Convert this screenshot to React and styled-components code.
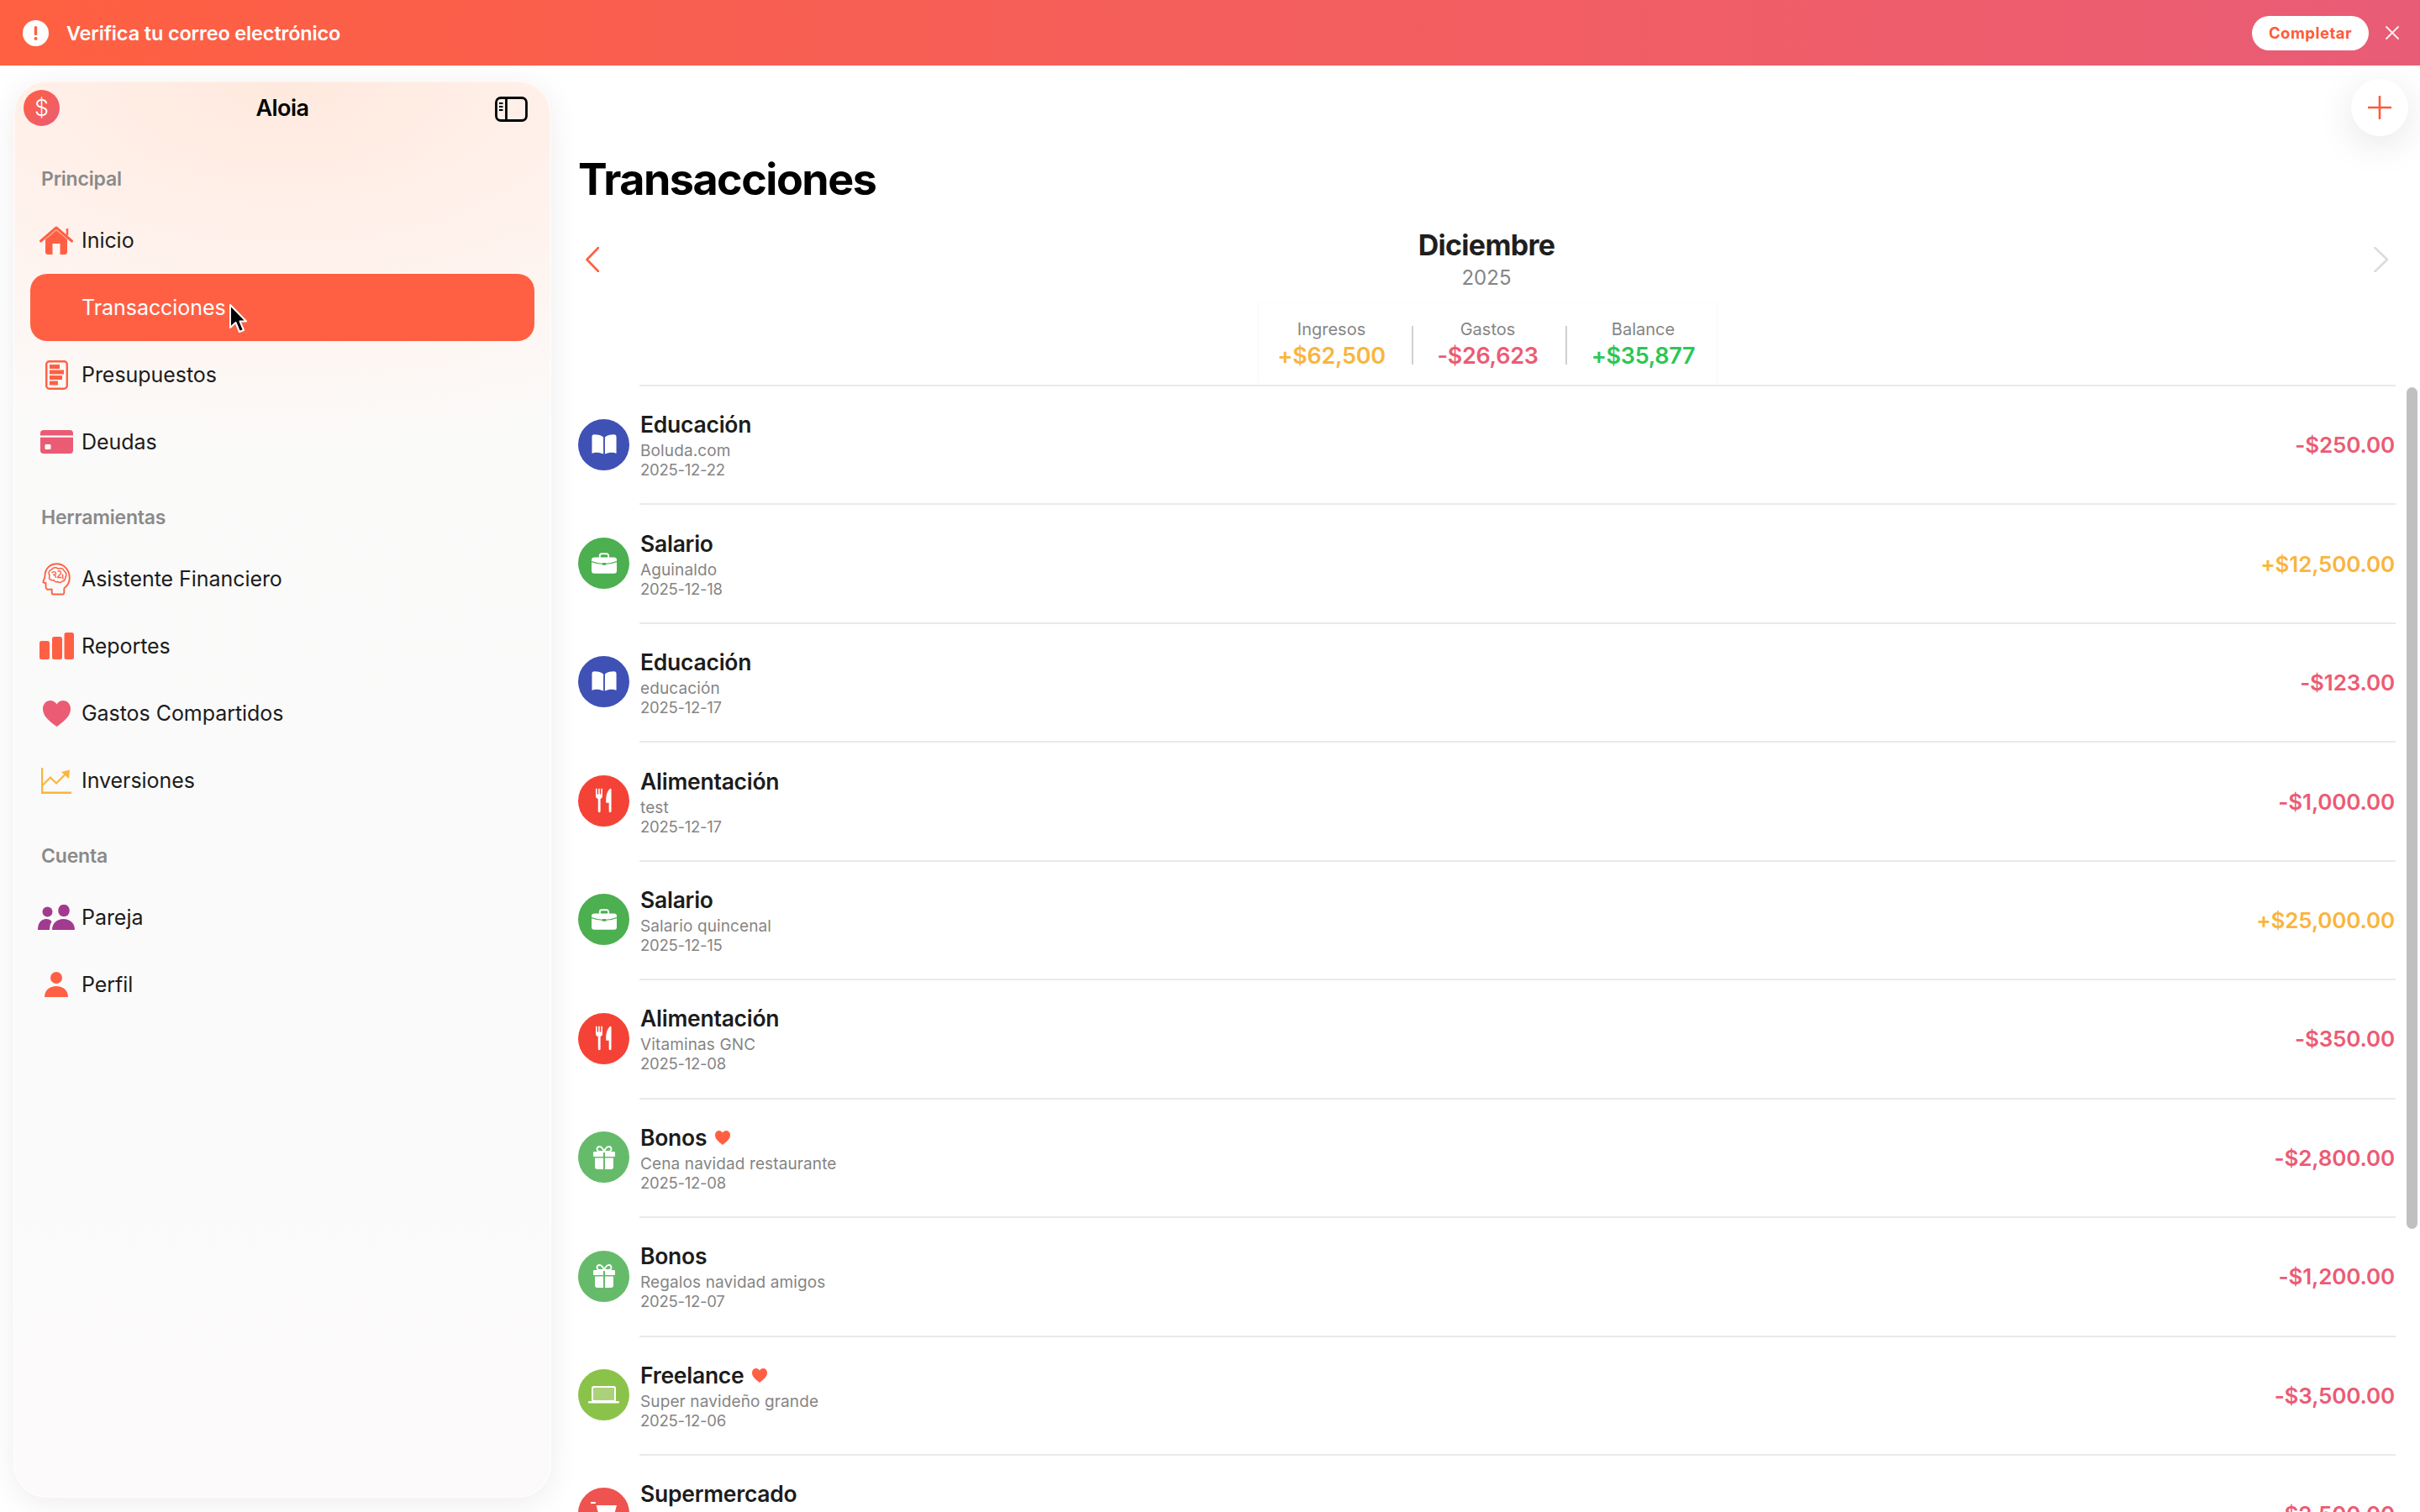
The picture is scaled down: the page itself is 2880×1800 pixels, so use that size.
import React from "react";
import styled, { createGlobalStyle } from "styled-components";

const ORANGE = "#ff6044";
const PINK = "#ec5b74";
const AMBER = "#f9b53d";
const GREEN = "#2cc656";

const Global = createGlobalStyle`
  html, body { margin: 0; padding: 0; height: 100%; overflow: hidden; background: #fff; }
  body { font-family: Inter, "Liberation Sans", sans-serif; -webkit-font-smoothing: antialiased; }
  #root { height: 100%; }
  * { box-sizing: border-box; }
`;

const Page = styled.div`
  position: relative;
  width: 2880px;
  height: 1800px;
  display: flex;
  flex-direction: column;
  overflow: hidden;
  background: #fff;
`;

const Banner = styled.header`
  height: 78px;
  flex: none;
  display: flex;
  align-items: center;
  padding: 0 25px 0 27px;
  background: linear-gradient(90deg, #ff6041 0%, #e95c76 100%);
  color: #fff;
  z-index: 3;
`;
const BannerText = styled.span`
  margin-left: 21px;
  font-size: 23.5px;
  font-weight: 600;
  letter-spacing: -0.15px;
  flex: 1;
`;
const CompleteButton = styled.button`
  width: 139px;
  height: 41px;
  border: 0;
  border-radius: 21px;
  background: #fff;
  color: #ff5a3a;
  font: 700 18.5px Inter, sans-serif;
  letter-spacing: 0.5px;
  padding: 0;
`;
const CloseButton = styled.span`
  display: flex;
  margin-left: 20px;
`;

const Content = styled.div`
  flex: 1;
  min-height: 0;
  display: flex;
  align-items: flex-start;
`;

const Sidebar = styled.aside`
  flex: none;
  width: 640px;
  height: 1687px;
  margin: 18px 0 0 16px;
  border-radius: 40px;
  background:
    radial-gradient(ellipse 130% 26% at 50% 0%, #ffe9de 0%, #fff3ee 55%, rgba(255, 245, 241, 0) 100%),
    linear-gradient(180deg, #fbfaf9 0%, #fafafa 60%, #fcfafa 100%);
  box-shadow: inset 0 0 0 1.5px rgba(255, 255, 255, 0.7), 0 6px 36px rgba(0, 0, 0, 0.075);
  z-index: 2;
`;
const SideHeader = styled.div`
  height: 64px;
  margin-bottom: 38px;
  padding: 0 28px 0 12px;
  display: grid;
  grid-template-columns: 1fr auto 1fr;
  align-items: center;
`;
const Logo = styled.div`
  width: 43px;
  height: 43px;
  border-radius: 50%;
  background: linear-gradient(135deg, #ff6041, #e95c76);
  color: #fff;
  display: flex;
  align-items: center;
  justify-content: center;
  font-size: 27px;
  font-weight: 300;
`;
const Brand = styled.div`
  font-size: 27px;
  font-weight: 600;
  color: #000;
  letter-spacing: -0.5px;
  transform: translateX(8px);
`;
const ToggleIcon = styled.svg`
  margin-top: 4px;
  justify-self: end;
`;

const Section = styled.section`
  margin-bottom: 35px;
`;
const SectionLabel = styled.div`
  height: 30px;
  line-height: 30px;
  margin: 0 0 18px 33px;
  font-size: 23px;
  font-weight: 600;
  color: #8a8a8a;
  letter-spacing: -0.2px;
`;
const NavRow = styled.div`
  height: 80px;
  margin: 0 20px;
  padding-left: 9px;
  border-radius: 20px;
  display: flex;
  align-items: center;
  background: ${(p) => (p.$active ? ORANGE : "transparent")};
  color: ${(p) => (p.$active ? "#fff" : "#1c1c1c")};
  font-size: 25px;
  letter-spacing: -0.05px;
  font-weight: 400;
`;
const NavIcon = styled.span`
  width: 44px;
  margin-right: 8px;
  display: flex;
  justify-content: center;
  flex: none;
`;

const Main = styled.main`
  flex: 1;
  min-width: 0;
  padding: 0 29px 0 33px;
`;
const Title = styled.h1`
  margin: 105px 0 0 -1px;
  height: 62px;
  line-height: 62px;
  font-size: 52px;
  font-weight: 700;
  color: #000;
  letter-spacing: -1.5px;
`;
const MonthNav = styled.div`
  margin-top: 27px;
  padding: 0 8px;
  display: flex;
  align-items: center;
  justify-content: space-between;
`;
const MonthCenter = styled.div`
  text-align: center;
`;
const MonthName = styled.div`
  line-height: 40px;
  font-size: 34px;
  font-weight: 700;
  color: #1f1f1f;
  letter-spacing: -0.7px;
`;
const YearName = styled.div`
  margin-top: 4px;
  line-height: 30px;
  font-size: 24px;
  color: #858585;
`;
const StatsCard = styled.div`
  width: 547px;
  height: 98px;
  margin: 14px auto 0;
  padding-top: 2px;
  display: flex;
  align-items: center;
  border: 1px solid #fafafa;
  border-bottom: 0;
  background: #fff;
`;
const Stat = styled.div`
  flex: none;
  text-align: center;
  &:nth-child(1) { width: 182px; padding-right: 8px; }
  &:nth-child(3) { width: 181px; padding-right: 3px; }
  &:nth-child(5) { width: 178px; padding-left: 4px; }
`;
const StatLabel = styled.div`
  line-height: 24px;
  font-size: 20px;
  color: #858585;
`;
const StatValue = styled.div`
  margin-top: 2px;
  line-height: 36px;
  font-size: 27px;
  font-weight: 600;
  color: ${(p) => p.$color};
  letter-spacing: -0.3px;
`;
const StatDivider = styled.div`
  width: 2px;
  height: 46px;
  background: #d0d0d0;
  flex: none;
`;

const List = styled.div``;
const Row = styled.div`
  height: 141.44px;
  display: flex;
`;
const IconDisc = styled.div`
  width: 61px;
  height: 61px;
  margin: 40.5px 12px 0 -1px;
  border-radius: 50%;
  background: ${(p) => p.$color};
  display: flex;
  align-items: center;
  justify-content: center;
  flex: none;
`;
const RowBody = styled.div`
  flex: 1;
  min-width: 0;
  border-top: 2px solid #e9e9e9;
  display: flex;
  align-items: center;
  justify-content: space-between;
  padding-right: 1px;
`;
const RowText = styled.div`
  margin-left: 1px;
`;
const RowName = styled.div`
  display: flex;
  align-items: center;
  line-height: 33px;
  font-size: 26.5px;
  font-weight: 600;
  color: #1c1c1c;
  letter-spacing: -0.25px;
`;
const HeartMark = styled.svg`
  margin-left: 10px;
`;
const RowSub = styled.div`
  margin-top: 4px;
  line-height: 22px;
  font-size: 19px;
  color: #858585;
  letter-spacing: 0.12px;
`;
const RowDate = styled.div`
  line-height: 22px;
  font-size: 18.5px;
  color: #858585;
  letter-spacing: -0.25px;
`;
const RowAmount = styled.div`
  font-size: 26px;
  font-weight: 600;
  color: ${(p) => p.$color};
  letter-spacing: -0.15px;
`;

const FloatingAdd = styled.button`
  position: absolute;
  top: 94px;
  right: 14px;
  width: 68px;
  height: 68px;
  border-radius: 50%;
  border: 0;
  padding: 0;
  background: #fff;
  box-shadow: 0 10px 44px rgba(0, 0, 0, 0.1);
  display: flex;
  align-items: center;
  justify-content: center;
  z-index: 3;
`;
const ScrollThumb = styled.div`
  position: absolute;
  top: 461px;
  left: 2864px;
  width: 13px;
  height: 1002px;
  border-radius: 7px;
  background: #c0c0c0;
  z-index: 3;
`;
const Pointer = styled.svg`
  position: absolute;
  top: 361px;
  left: 272px;
  z-index: 4;
`;

const HomeIcon = () => (
  <svg width="40" height="34" viewBox="0 0 40 34">
    <path d="M7 16 20 5l13 11v15a3 3 0 0 1-3 3H10a3 3 0 0 1-3-3Z" fill={ORANGE} />
    <rect x="15.500" y="21" width="9" height="13" fill="#fff6f2" />
    <path d="M1.500 18 20 2l18.500 16" fill="none" stroke={ORANGE} strokeWidth="3" strokeLinecap="round" strokeLinejoin="round" />
    <path d="M33 3v8" fill="none" stroke={ORANGE} strokeWidth="2.500" />
  </svg>
);
const BudgetIcon = () => (
  <svg width="27" height="35" viewBox="0 0 27 35">
    <rect x="1.200" y="1.200" width="24.600" height="32.600" rx="3.500" fill="none" stroke={ORANGE} strokeWidth="2.400" />
    <rect x="5" y="5" width="12" height="5" fill={ORANGE} />
    <rect x="5" y="11.500" width="17" height="5" fill={ORANGE} />
    <rect x="5" y="18" width="15" height="5" fill={ORANGE} />
    <rect x="5" y="24.500" width="10" height="5" fill={ORANGE} />
  </svg>
);
const CardIcon = () => (
  <svg width="39" height="28" viewBox="0 0 39 28">
    <rect width="39" height="28" rx="4" fill={PINK} />
    <rect y="6.500" width="39" height="2.200" fill="#fff" />
    <rect x="5.500" y="17" width="7" height="6" rx="1" fill="#fff" />
  </svg>
);
const BrainIcon = () => (
  <svg width="34" height="39" viewBox="0 0 34 39" fill="none" stroke={ORANGE} strokeLinecap="round" strokeLinejoin="round">
    <path strokeWidth="1.900" d="M14 37.500h10.500a1.800 1.800 0 0 0 1.800-1.800v-5.200c4.300-3.300 6.500-7.200 6.500-12.500C32.800 8.500 26.300 1.200 17.500 1.200 9 1.200 3.500 7.500 3.500 15.500c0 1.300-.2 2.200-.8 3.200L1.500 22c-.4 1 0 1.700 1.200 1.800l1.800.2v4.500c0 2.400 1.700 3.600 4 3.300l3.200-.4v4.500c0 1 1.100 1.600 2.300 1.600Z" />
    <path strokeWidth="1.500" d="M9 15c-2-3-.5-6.500 2.500-7 1.500-2.500 5.500-3 7.500-1 3-1.500 6.500 0 7.500 3 2.500 1.500 3.200 5 1.200 7.500.3 2.500-1.500 4.700-4 4.700-1 1.700-3.500 1.800-4.700.3-2 .7-4.300-.2-5-2-2.500.7-4.800-.5-5.500-2.500Z" />
    <path strokeWidth="1.400" d="M12 11.500c1.500-1.500 4-1 4.500.8.400 1.600-1.500 2.300-2.800 2 1.800.2 3 1.300 2.500 3M19 10c1.800-.8 3.500 0 3.500 1.700 0 1.800-3 3.200-4 5.800h4.500M24.500 14l.5 5" />
  </svg>
);
const BarsIcon = () => (
  <svg width="41" height="32" viewBox="0 0 41 32" fill={ORANGE}>
    <rect x="0" y="10" width="12" height="22" rx="2.500" />
    <rect x="15" y="5" width="12" height="27" rx="2.500" />
    <rect x="29.500" y="0" width="11.500" height="32" rx="2.500" />
  </svg>
);
const HeartIcon = () => (
  <svg width="33" height="31" viewBox="0 0 33 31">
    <path d="M16.500 31C7 24 0 18.200 0 9.700 0 4 4 0 8.900 0c3.300 0 6 1.600 7.600 4.600C18.100 1.600 20.800 0 24.100 0 29 0 33 4 33 9.700 33 18.200 26 24 16.500 31Z" fill={PINK} />
  </svg>
);
const TrendIcon = () => (
  <svg width="36" height="31" viewBox="0 0 36 31" fill="none" stroke={AMBER}>
    <path d="M1 0v29.700h35" strokeWidth="2.400" />
    <path d="M1.500 21 11 11.500l7 7L29 7.500" strokeWidth="2.200" />
    <path d="M24 5l10-2.500L33 13Z" fill={AMBER} stroke="none" />
  </svg>
);
const CoupleIcon = () => (
  <svg width="44" height="30" viewBox="0 0 44 30" fill="#a23a90">
    <ellipse cx="11.500" cy="8.500" rx="6" ry="6" />
    <ellipse cx="31" cy="7" rx="6.800" ry="7.300" />
    <path d="M0 30c0-8 4-13 10-13 3 0 5 1 6.500 3-1.600 2.700-2.500 6-2.500 10Z" />
    <path d="M17 30c0-8 6-13 13.500-13S44 22 44 30Z" />
  </svg>
);
const PersonIcon = () => (
  <svg width="28" height="30" viewBox="0 0 28 30" fill={ORANGE}>
    <ellipse cx="14" cy="7" rx="7" ry="7" />
    <path d="M0 30c0-8 6-13 14-13s14 5 14 13Z" />
  </svg>
);

const BookGlyph = () => (
  <svg width="30" height="25" viewBox="0 0 32 26">
    <path d="M15 3.500C12.500 1 8.500 0 3.500 0 1.500 0 .5 1 .5 3v21c3-1.500 9-2 14.500.7Z" fill="#fff" />
    <path d="M17 3.500C19.500 1 23.500 0 28.500 0c2 0 3 1 3 3v21c-3-1.500-9-2-14.500.7Z" fill="#fff" />
  </svg>
);
const BriefcaseGlyph = ({ bg }) => (
  <svg width="30" height="25" viewBox="0 0 32 26">
    <path d="M10.500 6V3.500A2.500 2.500 0 0 1 13 1h6a2.500 2.500 0 0 1 2.500 2.500V6" fill="none" stroke="#fff" strokeWidth="2" />
    <rect y="5.500" width="32" height="20.500" rx="3.500" fill="#fff" />
    <path d="M0 11c5 2 10.500 3 16 3s11-1 16-3" fill="none" stroke={bg} strokeWidth="1.200" />
    <rect x="13.500" y="12.500" width="5" height="3" rx=".8" fill={bg} />
  </svg>
);
const CutleryGlyph = () => (
  <svg width="19" height="30" viewBox="0 0 20 30" fill="#fff">
    <path d="M0 0h1.700v7h1.600V0H5v7h1.600V0h1.700v9.500c0 2-1.200 3-2.400 3.500v15.500a1.500 1.500 0 0 1-3 0V13C1.200 12.500 0 11.500 0 9.500Z" />
    <path d="M18 0c.8 0 1.500.5 1.500 1.500v27a1.500 1.500 0 0 1-3 0V18h-2.500c-.8 0-1.200-.5-1.200-1.200C12.800 10 13.500 4 18 0Z" />
  </svg>
);
const GiftGlyph = () => (
  <svg width="26" height="28" viewBox="0 0 26 28">
    <path d="M13 7C11 2 9 1 7.500 1 5.500 1 4.500 2.500 4.500 4c0 2 2 3 4 3ZM13 7c2-5 4-6 5.500-6 2 0 3 1.500 3 3 0 2-2 3-4 3Z" fill="none" stroke="#fff" strokeWidth="1.800" />
    <rect y="7" width="12" height="6" rx="1" fill="#fff" />
    <rect x="14" y="7" width="12" height="6" rx="1" fill="#fff" />
    <path d="M2 14.500h10V28H5a3 3 0 0 1-3-3ZM14 14.500h10V25a3 3 0 0 1-3 3h-7Z" fill="#fff" />
  </svg>
);
const LaptopGlyph = () => (
  <svg width="37" height="21" viewBox="0 0 37 21">
    <rect x="5" y="1" width="27" height="17" rx="1.800" fill="#abd27a" stroke="#fff" strokeWidth="2" />
    <rect y="18" width="37" height="2.600" rx="1.300" fill="#fff" />
  </svg>
);
const CartGlyph = () => (
  <svg width="32" height="28" viewBox="0 0 32 28" fill="#fff">
    <path d="M0 0h5.500l1 4H31l-3.500 13H10L6 2H0Z" />
    <circle cx="11" cy="24" r="3" />
    <circle cx="25" cy="24" r="3" />
  </svg>
);

const CATS = {
  edu: { color: "#3f51b5", Glyph: BookGlyph },
  sal: { color: "#4caf50", Glyph: BriefcaseGlyph },
  ali: { color: "#f44336", Glyph: CutleryGlyph },
  bon: { color: "#66bb6a", Glyph: GiftGlyph },
  fre: { color: "#8bc34a", Glyph: LaptopGlyph },
  sup: { color: "#ef5350", Glyph: CartGlyph },
};

const NAV = [
  {
    label: "Principal",
    items: [
      ["Inicio", <HomeIcon />],
      ["Transacciones", null, true],
      ["Presupuestos", <BudgetIcon />],
      ["Deudas", <CardIcon />],
    ],
  },
  {
    label: "Herramientas",
    items: [
      ["Asistente Financiero", <BrainIcon />],
      ["Reportes", <BarsIcon />],
      ["Gastos Compartidos", <HeartIcon />],
      ["Inversiones", <TrendIcon />],
    ],
  },
  {
    label: "Cuenta",
    items: [
      ["Pareja", <CoupleIcon />],
      ["Perfil", <PersonIcon />],
    ],
  },
];

const ROWS = [
  ["edu", "Educación", "Boluda.com", "2025-12-22", "-$250.00", PINK],
  ["sal", "Salario", "Aguinaldo", "2025-12-18", "+$12,500.00", AMBER],
  ["edu", "Educación", "educación", "2025-12-17", "-$123.00", PINK],
  ["ali", "Alimentación", "test", "2025-12-17", "-$1,000.00", PINK],
  ["sal", "Salario", "Salario quincenal", "2025-12-15", "+$25,000.00", AMBER],
  ["ali", "Alimentación", "Vitaminas GNC", "2025-12-08", "-$350.00", PINK],
  ["bon", "Bonos", "Cena navidad restaurante", "2025-12-08", "-$2,800.00", PINK, true],
  ["bon", "Bonos", "Regalos navidad amigos", "2025-12-07", "-$1,200.00", PINK],
  ["fre", "Freelance", "Super navideño grande", "2025-12-06", "-$3,500.00", PINK, true],
  ["sup", "Supermercado", "Super", "2025-12-05", "-$2,500.00", PINK],
];

export default function App() {
  return (
    <Page>
      <Global />
      <Banner>
        <svg width="31" height="31" viewBox="0 0 31 31">
          <circle cx="15.500" cy="15.500" r="15.500" fill="#fff" />
          <rect x="13.800" y="7" width="3.400" height="11" rx="1.600" fill={ORANGE} />
          <circle cx="15.500" cy="22" r="2" fill={ORANGE} />
        </svg>
        <BannerText>Verifica tu correo electrónico</BannerText>
        <CompleteButton>Completar</CompleteButton>
        <CloseButton>
          <svg width="16" height="16" viewBox="0 0 16 16">
            <path d="M1 1l14 14M15 1 1 15" stroke="#fff" strokeOpacity=".9" strokeWidth="1.800" strokeLinecap="round" />
          </svg>
        </CloseButton>
      </Banner>
      <Content>
        <Sidebar>
          <SideHeader>
            <Logo>$</Logo>
            <Brand>Aloia</Brand>
            <ToggleIcon width="39" height="30" viewBox="0 0 39 30" fill="none" stroke="#000">
              <rect x="1.500" y="1.500" width="36" height="27" rx="5.500" strokeWidth="2.800" />
              <path d="M13.500 1.500v27" strokeWidth="2.800" />
              <path d="M5 8h4.500M5 12h4.500M5 16h4.500" strokeWidth="1.800" />
            </ToggleIcon>
          </SideHeader>
          {NAV.map((group) => (
            <Section key={group.label}>
              <SectionLabel>{group.label}</SectionLabel>
              {group.items.map(([text, icon, active]) => (
                <NavRow key={text} $active={active}>
                  <NavIcon>{icon}</NavIcon>
                  {text}
                </NavRow>
              ))}
            </Section>
          ))}
        </Sidebar>
        <Main>
          <Title>Transacciones</Title>
          <MonthNav>
            <svg width="16" height="30" viewBox="0 0 16 30">
              <path d="M15 1 1.500 15 15 29" fill="none" stroke={ORANGE} strokeWidth="2.600" strokeLinecap="round" strokeLinejoin="round" />
            </svg>
            <MonthCenter>
              <MonthName>Diciembre</MonthName>
              <YearName>2025</YearName>
            </MonthCenter>
            <svg width="18" height="30" viewBox="0 0 18 30">
              <path d="M1.500 1 16 15 1.500 29" fill="none" stroke="#dcdcdc" strokeWidth="2.600" strokeLinecap="round" strokeLinejoin="round" />
            </svg>
          </MonthNav>
          <StatsCard>
            <Stat>
              <StatLabel>Ingresos</StatLabel>
              <StatValue $color={AMBER}>+$62,500</StatValue>
            </Stat>
            <StatDivider />
            <Stat>
              <StatLabel>Gastos</StatLabel>
              <StatValue $color={PINK}>-$26,623</StatValue>
            </Stat>
            <StatDivider />
            <Stat>
              <StatLabel>Balance</StatLabel>
              <StatValue $color={GREEN}>+$35,877</StatValue>
            </Stat>
          </StatsCard>
          <List>
            {ROWS.map(([cat, name, sub, date, amount, color, fav], i) => {
              const { color: bg, Glyph } = CATS[cat];
              return (
                <Row key={i}>
                  <IconDisc $color={bg}>
                    <Glyph bg={bg} />
                  </IconDisc>
                  <RowBody>
                    <RowText>
                      <RowName>
                        {name}
                        {fav && (
                          <HeartMark width="18" height="17" viewBox="0 0 33 31">
                            <path d="M16.500 31C7 24 0 18.200 0 9.700 0 4 4 0 8.900 0c3.300 0 6 1.600 7.600 4.600C18.100 1.600 20.800 0 24.100 0 29 0 33 4 33 9.700 33 18.200 26 24 16.500 31Z" fill={ORANGE} />
                          </HeartMark>
                        )}
                      </RowName>
                      <RowSub>{sub}</RowSub>
                      <RowDate>{date}</RowDate>
                    </RowText>
                    <RowAmount $color={color}>{amount}</RowAmount>
                  </RowBody>
                </Row>
              );
            })}
          </List>
        </Main>
      </Content>
      <FloatingAdd aria-label="Agregar">
        <svg width="28" height="28" viewBox="0 0 28 28">
          <path d="M14 1v26M1 14h26" stroke="#ff5a3a" strokeWidth="2.600" strokeLinecap="round" />
        </svg>
      </FloatingAdd>
      <ScrollThumb />
      <Pointer width="22" height="36" viewBox="0 0 22 36">
        <path d="M2 2v27l6.500-6 4.500 11 5-2-4.500-10.500H21Z" fill="#000" stroke="#fff" strokeWidth="2" strokeLinejoin="round" />
      </Pointer>
    </Page>
  );
}
